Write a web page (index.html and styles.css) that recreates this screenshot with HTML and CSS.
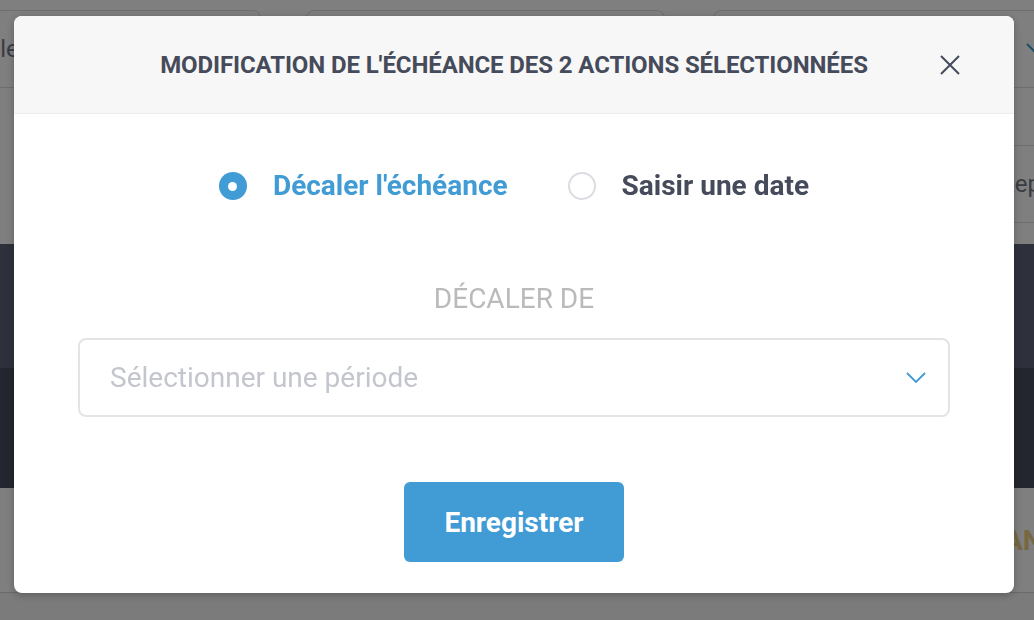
FILE: index.html
```html
<!DOCTYPE html>
<html lang="fr">
<head>
<meta charset="utf-8">
<title>Modification de l'échéance</title>
<link rel="stylesheet" href="styles.css">
</head>
<body>
<div class="page">
  <div class="filters">
    <div class="field f1"><span class="v1">Responsable</span></div>
    <div class="field f2"></div>
    <div class="field f3">
      <svg class="chev" width="20" height="12" viewBox="0 0 20 12"><path d="M1 1 L10 10 L19 1" fill="none" stroke="#419bd4" stroke-width="2"/></svg>
    </div>
  </div>
  <div class="filters2">
    <div class="field f4"><span class="v4">Représentant</span></div>
  </div>
  <div class="band band-a"></div>
  <div class="band band-b"></div>
  <div class="summary"><span class="gold">ANNULÉES</span></div>
  <div class="footer"></div>
</div>

<div class="overlay">
  <div class="modal">
    <div class="modal-header">
      <h2 class="modal-title">MODIFICATION DE L'ÉCHÉANCE DES 2 ACTIONS SÉLECTIONNÉES</h2>
      <button class="close" aria-label="Fermer">
        <svg width="20" height="20" viewBox="0 0 20 20"><path d="M1 1 L19 19 M19 1 L1 19" stroke="#454b5a" stroke-width="2" fill="none"/></svg>
      </button>
    </div>
    <div class="modal-body">
      <div class="choices">
        <label class="choice active"><span class="radio on"><span class="dot"></span></span><span class="choice-text">Décaler l'échéance</span></label>
        <label class="choice"><span class="radio"></span><span class="choice-text">Saisir une date</span></label>
      </div>
      <div class="field-label">DÉCALER DE</div>
      <div class="select">
        <span class="placeholder">Sélectionner une période</span>
        <svg width="20" height="12" viewBox="0 0 20 12"><path d="M1 1 L10 10 L19 1" fill="none" stroke="#419bd4" stroke-width="1.8"/></svg>
      </div>
      <button class="save">Enregistrer</button>
    </div>
  </div>
</div>
</body>
</html>
```
FILE: styles.css
```css
html, body {
  margin: 0;
  padding: 0;
}
body {
  width: 1034px;
  height: 620px;
  overflow: hidden;
  font-family: Roboto, "Noto Sans", sans-serif;
  background: #fff;
}

/* underlying page */
.page {
  width: 1034px;
  height: 620px;
  overflow: hidden;
}
.filters {
  display: flex;
  padding-top: 10px;
  margin-left: -120px;
}
.field {
  box-sizing: border-box;
  height: 78px;
  border: 1px solid #dcdcdc;
  border-radius: 8px;
  display: flex;
  align-items: center;
  flex-shrink: 0;
  background: #fff;
}
.f1 { width: 381px; }
.v1 {
  width: 134px;
  text-align: right;
  font-size: 24px;
  color: #74788a;
  white-space: nowrap;
}
.f2 { width: 359px; margin-left: 45px; }
.f3 {
  width: 358px;
  margin-left: 48px;
  justify-content: flex-end;
  padding-right: 24px;
}
.filters2 {
  display: flex;
  padding-top: 57px;
  padding-left: 967px;
}
.f4 { width: 220px; padding-left: 32px; }
.v4 {
  font-size: 24px;
  color: #74788a;
  white-space: nowrap;
}
.band-a {
  margin-top: 21px;
  height: 124px;
  background: #5c6278;
}
.band-b {
  height: 120px;
  background: #464c5c;
}
.summary {
  height: 104px;
  display: flex;
  align-items: center;
  padding-left: 1004px;
}
.gold {
  font-size: 28px;
  font-weight: 700;
  color: #f0d084;
  white-space: nowrap;
}
.footer {
  height: 28px;
  border-top: 1px solid #d4d4d4;
  background: #f6f6f6;
}

/* overlay + modal */
.overlay {
  position: fixed;
  inset: 0;
  background: rgba(0, 0, 0, 0.5);
  padding: 16px 0 0 14px;
  box-sizing: border-box;
}
.modal {
  width: 1000px;
  background: #fff;
  border-radius: 8px;
  overflow: hidden;
  box-shadow: 0 2px 8px rgba(0, 0, 0, 0.25);
}
.modal-header {
  display: grid;
  grid-template-columns: 1fr auto 1fr;
  align-items: center;
  height: 97px;
  background: #f7f7f7;
  border-bottom: 1px solid #ececec;
}
.modal-title {
  grid-column: 2;
  margin: 0;
  font-size: 24px;
  font-weight: 700;
  letter-spacing: -0.1px;
  color: #454b5a;
  white-space: nowrap;
  line-height: 28px;
}
.close {
  grid-column: 3;
  justify-self: end;
  margin-right: 54px;
  padding: 0;
  border: 0;
  background: none;
  width: 20px;
  height: 20px;
  display: flex;
}
.modal-body {
  display: flex;
  flex-direction: column;
  align-items: center;
  padding: 56px 0 31px;
}
.choices {
  display: flex;
  gap: 60px;
  height: 32px;
}
.choice {
  display: flex;
  align-items: center;
  gap: 26px;
  font-size: 28px;
  font-weight: 700;
  line-height: 32px;
  color: #454b5a;
}
.choice.active { color: #419bd4; }
.radio {
  box-sizing: border-box;
  width: 28px;
  height: 28px;
  border-radius: 50%;
  border: 2px solid #dcdde3;
  display: flex;
  align-items: center;
  justify-content: center;
}
.radio.on {
  border: 0;
  background: #419bd4;
}
.dot {
  width: 9px;
  height: 9px;
  border-radius: 50%;
  background: #fff;
}
.field-label {
  margin-top: 81px;
  font-size: 28px;
  line-height: 32px;
  color: #bababa;
}
.select {
  box-sizing: border-box;
  margin-top: 23px;
  width: 872px;
  height: 79px;
  border: 2px solid #e4e4e6;
  border-radius: 8px;
  display: flex;
  align-items: center;
  justify-content: space-between;
  padding: 0 22px 0 30px;
}
.placeholder {
  font-size: 28px;
  color: #c4c6cd;
}
.save {
  margin-top: 65px;
  width: 220px;
  height: 80px;
  border: 0;
  border-radius: 6px;
  background: #419bd4;
  color: #fff;
  font-family: Roboto, "Noto Sans", sans-serif;
  font-size: 28px;
  font-weight: 700;
}
```
